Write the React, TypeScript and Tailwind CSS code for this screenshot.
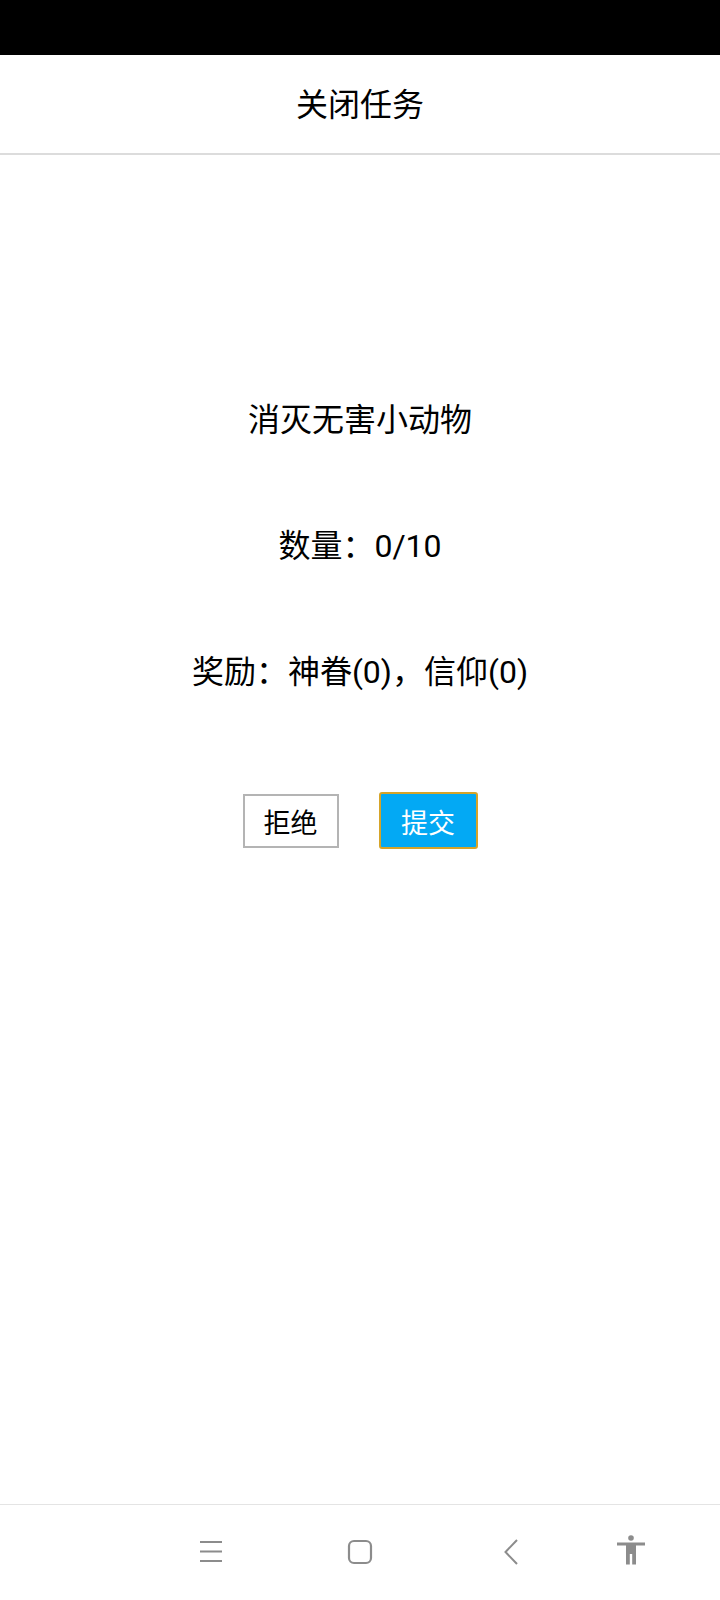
// 关闭任务 screen: task summary with reject / submit buttons
import React from 'react';

const NavBar = () => (
  <footer className="h-[96px] border-t border-[#e4e4e4] bg-white flex items-start pt-[30px] pl-[200px]">
    <svg width="22" height="24" viewBox="0 0 22 24" className="mt-[6px] text-[#8c8c8c]" fill="none" stroke="currentColor" strokeWidth="1.8">
      <path d="M0 1h22M0 10.500h22M0 20h22" />
    </svg>
    <svg width="26" height="26" viewBox="0 0 26 26" className="ml-[125px] mt-[4px] text-[#8c8c8c]" fill="none" stroke="currentColor" strokeWidth="2.2">
      <rect x="2" y="2" width="22" height="22" rx="5" />
    </svg>
    <svg width="14" height="26" viewBox="0 0 14 26" className="ml-[131px] mt-[4px] text-[#8c8c8c]" fill="none" stroke="currentColor" strokeWidth="2">
      <path d="M13 1 1.500 13 13 25" />
    </svg>
    <svg width="28" height="30" viewBox="0 0 28 30" className="ml-[99px] text-[#8c8c8c]" fill="currentColor">
      <circle cx="14" cy="3" r="2.800" />
      <path d="M0 7.500h28v3H19v19h-3.800V19h-2.400v10.500H9v-19H0z" />
    </svg>
  </footer>
);

export default function App() {
  return (
    <div
      className="w-[720px] h-[1600px] bg-white flex flex-col text-black"
      style={{ fontFamily: 'Roboto, "Noto Sans CJK SC", sans-serif' }}
    >
      <div className="h-[55px] bg-black" />

      <header className="h-[100px] border-b-2 border-[#dcdcdc] flex items-center justify-center pt-[2px]">
        <h1 className="text-[32px] leading-none font-normal">关闭任务</h1>
      </header>

      <main className="flex-1 flex flex-col items-center pt-[245px]">
        <p className="text-[32px] leading-[40px]">消灭无害小动物</p>
        <p className="text-[32px] leading-[40px] mt-[86px]">数量：0/10</p>
        <p className="text-[32px] leading-[40px] mt-[86px]">奖励：神眷(0)，信仰(0)</p>
        <div className="flex items-center gap-[40px] mt-[100px]">
          <button className="w-[96px] h-[54px] border-2 border-[#b4b4b4] bg-white text-[27px] leading-none pt-[8px]">
            拒绝
          </button>
          <button className="w-[99px] h-[57px] border-2 border-[#d6a429] rounded-[3px] bg-[#03a9f4] text-white text-[27px] leading-none pt-[8px]">
            提交
          </button>
        </div>
      </main>

      <NavBar />
    </div>
  );
}
